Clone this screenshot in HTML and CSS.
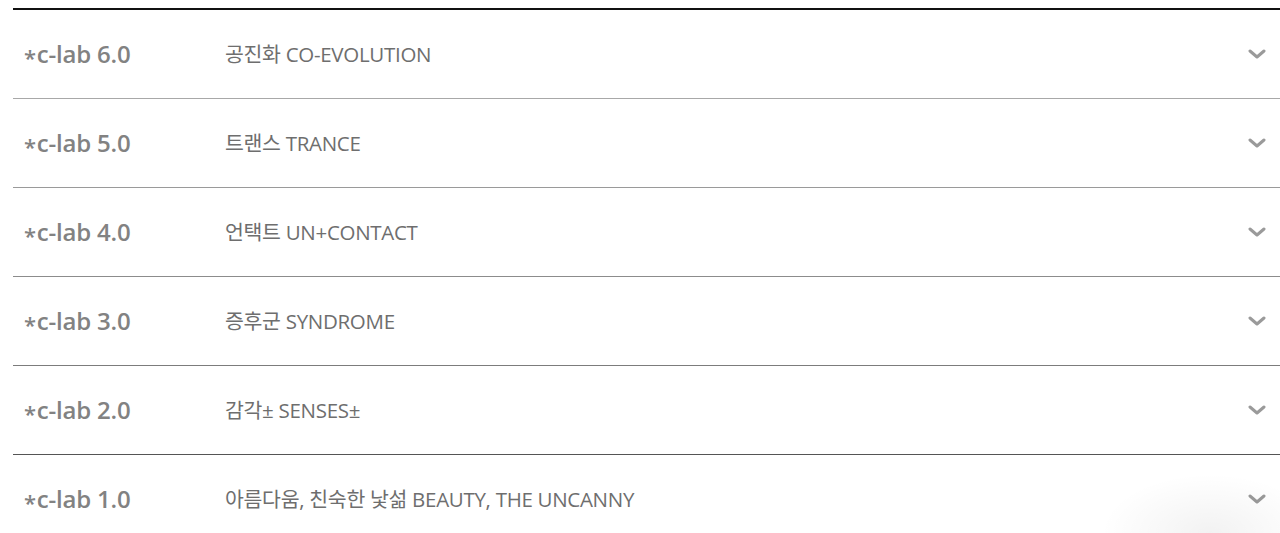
FILE: index.html
```html
<!DOCTYPE html>
<html lang="ko">
<head>
<meta charset="utf-8">
<title>c-lab</title>
<link rel="stylesheet" href="styles.css">
</head>
<body>
<div class="list">
  <div class="row r1"><span class="ver"><span class="ast">*</span>c-lab 6.0</span><span class="title">공진화 CO-EVOLUTION</span><svg class="chev" viewBox="0 0 18 10"><path d="M2 2 L9 8 L16 2"/></svg></div>
  <div class="row r2"><span class="ver"><span class="ast">*</span>c-lab 5.0</span><span class="title">트랜스 TRANCE</span><svg class="chev" viewBox="0 0 18 10"><path d="M2 2 L9 8 L16 2"/></svg></div>
  <div class="row r3"><span class="ver"><span class="ast">*</span>c-lab 4.0</span><span class="title">언택트 UN+CONTACT</span><svg class="chev" viewBox="0 0 18 10"><path d="M2 2 L9 8 L16 2"/></svg></div>
  <div class="row r4"><span class="ver"><span class="ast">*</span>c-lab 3.0</span><span class="title">증후군 SYNDROME</span><svg class="chev" viewBox="0 0 18 10"><path d="M2 2 L9 8 L16 2"/></svg></div>
  <div class="row r5"><span class="ver"><span class="ast">*</span>c-lab 2.0</span><span class="title">감각± SENSES±</span><svg class="chev" viewBox="0 0 18 10"><path d="M2 2 L9 8 L16 2"/></svg></div>
  <div class="row r6"><span class="ver"><span class="ast">*</span>c-lab 1.0</span><span class="title">아름다움, 친숙한 낯섦 BEAUTY, THE UNCANNY</span><svg class="chev" viewBox="0 0 18 10"><path d="M2 2 L9 8 L16 2"/></svg></div>
</div>
<div class="shade"></div>
</body>
</html>
```
FILE: styles.css
```css
html, body {
  margin: 0;
  padding: 0;
  background: #fff;
  overflow: hidden;
}
body {
  font-family: "Open Sans", "Noto Sans CJK KR", sans-serif;
  height: 533px;
}
.list {
  margin-top: 8px;
  margin-left: 13px;
  border-top: 2px solid #111;
}
.row {
  display: flex;
  align-items: center;
  height: 88px;
  border-bottom: 1px solid #999;
}
.r1 { border-bottom-color: #a8a8a8; }
.r2 { border-bottom-color: #9a9a9a; }
.r3 { border-bottom-color: #8c8c8c; }
.r4 { border-bottom-color: #7c7c7c; }
.r5 { border-bottom-color: #555; }
.ver {
  width: 212px;
  padding-left: 11px;
  box-sizing: border-box;
  font-size: 24px;
  line-height: 30px;
  font-weight: 600;
  color: #828282;
  letter-spacing: -0.2px;
}
.ast {
  font-size: 22px;
  line-height: 0;
  vertical-align: -3px;
  margin-right: 1px;
}
.title {
  flex: 1;
  padding-bottom: 2px;
  font-size: 20.5px;
  font-weight: 400;
  color: #6e6e6e;
  letter-spacing: -0.3px;
}
.chev {
  width: 18px;
  height: 10px;
  margin-right: 14px;
  fill: none;
  stroke: #9a9a9a;
  stroke-width: 3;
  stroke-linecap: round;
  stroke-linejoin: round;
}
.shade {
  position: absolute;
  right: -40px;
  bottom: -60px;
  width: 220px;
  height: 120px;
  border-radius: 50%;
  background: radial-gradient(ellipse at center, rgba(0,0,0,0.05), rgba(0,0,0,0) 70%);
  pointer-events: none;
}
```
